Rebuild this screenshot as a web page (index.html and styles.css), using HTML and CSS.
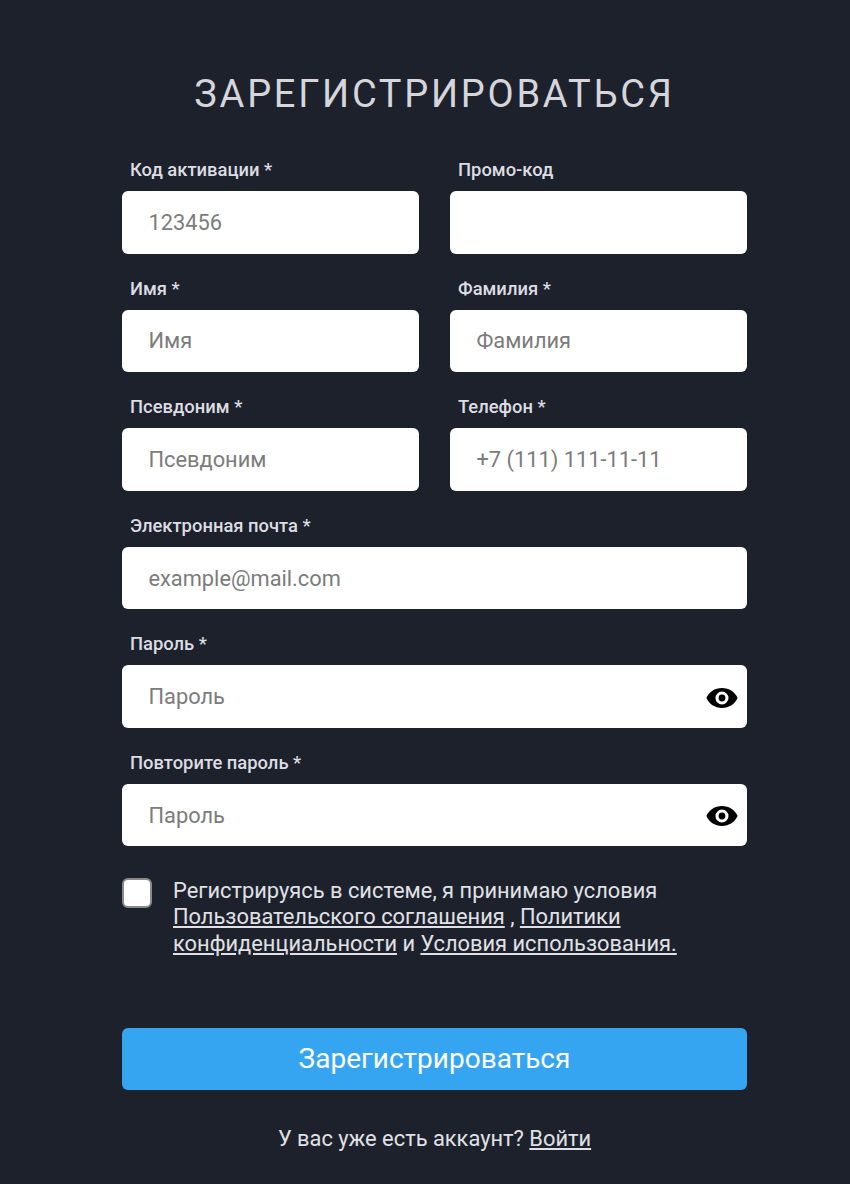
FILE: index.html
```html
<!DOCTYPE html>
<html lang="ru">
<head>
  <meta charset="UTF-8">
  <meta name="viewport" content="width=device-width, initial-scale=1.0">
  <title>Зарегистрироваться</title>
  <link rel="stylesheet" href="styles.css">
</head>
<body>
  <form class="registro">
    <h1 class="titulo">ЗАРЕГИСТРИРОВАТЬСЯ</h1>

    <div class="campos">
      <div class="campo">
        <label class="etiqueta">Код активации *</label>
        <input class="entrada" type="text" placeholder="123456">
      </div>
      <div class="campo">
        <label class="etiqueta">Промо-код</label>
        <input class="entrada" type="text">
      </div>
      <div class="campo">
        <label class="etiqueta">Имя *</label>
        <input class="entrada" type="text" placeholder="Имя">
      </div>
      <div class="campo">
        <label class="etiqueta">Фамилия *</label>
        <input class="entrada" type="text" placeholder="Фамилия">
      </div>
      <div class="campo">
        <label class="etiqueta">Псевдоним *</label>
        <input class="entrada" type="text" placeholder="Псевдоним">
      </div>
      <div class="campo">
        <label class="etiqueta">Телефон *</label>
        <input class="entrada" type="text" placeholder="+7 (111) 111-11-11">
      </div>
      <div class="campo ancho">
        <label class="etiqueta">Электронная почта *</label>
        <input class="entrada" type="text" placeholder="example@mail.com">
      </div>
      <div class="campo ancho">
        <label class="etiqueta">Пароль *</label>
        <div class="caja-clave">
          <input class="entrada" type="password" placeholder="Пароль">
          <svg class="ojo" viewBox="0 0 24 24"><path fill-rule="evenodd" d="M12 5C7 5 2.73 7.9 1 12c1.73 4.1 6 7 11 7s9.27-2.9 11-7c-1.73-4.1-6-7-11-7zM12 16.6a4.6 4.6 0 1 1 0-9.2 4.6 4.6 0 0 1 0 9.2z"/><circle cx="12" cy="12" r="2.4"/></svg>
        </div>
      </div>
      <div class="campo ancho">
        <label class="etiqueta">Повторите пароль *</label>
        <div class="caja-clave">
          <input class="entrada" type="password" placeholder="Пароль">
          <svg class="ojo" viewBox="0 0 24 24"><path fill-rule="evenodd" d="M12 5C7 5 2.73 7.9 1 12c1.73 4.1 6 7 11 7s9.27-2.9 11-7c-1.73-4.1-6-7-11-7zM12 16.6a4.6 4.6 0 1 1 0-9.2 4.6 4.6 0 0 1 0 9.2z"/><circle cx="12" cy="12" r="2.4"/></svg>
        </div>
      </div>
    </div>

    <div class="acuerdo">
      <span class="casilla"></span>
      <p class="acuerdo-texto">Регистрируясь в системе, я принимаю условия <a href="#">Пользовательского соглашения</a> , <a href="#">Политики конфиденциальности</a> и <a href="#">Условия использования.</a></p>
    </div>

    <button class="enviar" type="button">Зарегистрироваться</button>
    <p class="entrar">У вас уже есть аккаунт? <a href="#">Войти</a></p>
  </form>
</body>
</html>
```

FILE: styles.css
```css
* {
  margin: 0;
  padding: 0;
  box-sizing: border-box;
}

html, body {
  width: 100%;
  height: 100%;
  overflow: hidden;
  background-color: #1d212c;
  color: #e0e1e6;
  font-family: Roboto, "Liberation Sans", sans-serif;
}

.registro {
  width: 625px;
  margin-left: 122px;
  padding-top: 72px;
}

.titulo {
  font-size: 38px;
  font-weight: 400;
  line-height: 45px;
  letter-spacing: 2.74px;
  text-align: center;
  color: #d5d6db;
  margin-bottom: 43px;
}

.campos {
  display: grid;
  grid-template-columns: 297px 297px;
  column-gap: 31px;
  row-gap: 25.1px;
}

.campo.ancho {
  grid-column: 1 / 3;
}

.etiqueta {
  display: block;
  font-size: 18.4px;
  font-weight: 500;
  line-height: 20px;
  padding-left: 8px;
  margin-bottom: 11px;
  color: #dcdde2;
}

.entrada {
  display: block;
  width: 100%;
  height: 62.5px;
  border: none;
  border-radius: 6px;
  background: white;
  padding: 0 26.5px;
  font-family: Roboto, "Liberation Sans", sans-serif;
  font-size: 21.8px;
  outline: none;
}

.entrada::placeholder {
  color: #7c7c7c;
  opacity: 1;
}

.caja-clave {
  position: relative;
}

.ojo {
  position: absolute;
  right: 8px;
  top: 15.5px;
  width: 34px;
  height: 34px;
  fill: black;
}

.acuerdo {
  display: flex;
  gap: 21px;
  margin-top: 31.5px;
}

.casilla {
  flex: none;
  width: 30px;
  height: 30px;
  background: white;
  border: 2px solid #8a8a8a;
  border-radius: 6px;
}

.acuerdo-texto {
  font-size: 21.85px;
  line-height: 26.5px;
  width: 545px;
}

a {
  color: inherit;
}

.enviar {
  display: block;
  width: 100%;
  height: 62px;
  margin-top: 70.5px;
  border: none;
  border-radius: 6px;
  background-color: #36a5f1;
  color: white;
  font-family: Roboto, "Liberation Sans", sans-serif;
  font-size: 28px;
}

.entrar {
  font-size: 21.85px;
  line-height: 26px;
  text-align: center;
  margin-top: 36px;
}
```
